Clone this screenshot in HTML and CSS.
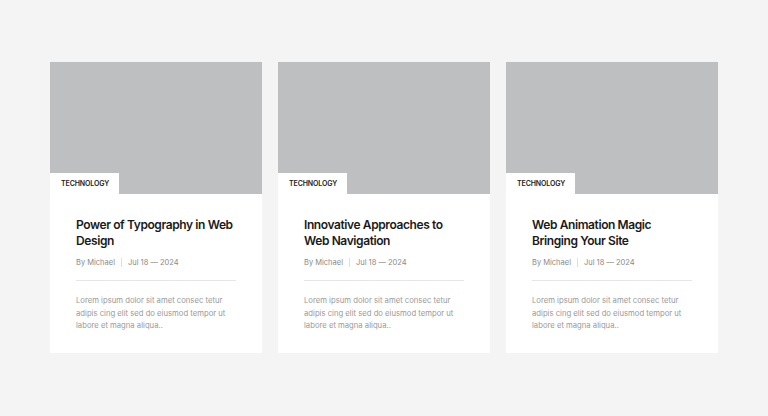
FILE: index.html
```html
<!DOCTYPE html>
<html lang="en">
<head>
    <meta charset="UTF-8">
    <meta name="viewport" content="width=device-width, initial-scale=1.0">
    <title>Blog</title>
    <link rel="stylesheet" href="styles.css">
</head>
<body>
    <div class="posts">
        <div class="post">
            <div class="post-image">
                <span class="post-tag">TECHNOLOGY</span>
            </div>
            <div class="post-body">
                <h3>Power of Typography in Web Design</h3>
                <div class="post-meta">
                    <span>By Michael</span>
                    <span class="sep"></span>
                    <span>Jul 18 — 2024</span>
                </div>
                <p>Lorem ipsum dolor sit amet consec tetur adipis cing elit sed do eiusmod tempor ut labore et magna aliqua..</p>
            </div>
        </div>
        <div class="post">
            <div class="post-image">
                <span class="post-tag">TECHNOLOGY</span>
            </div>
            <div class="post-body">
                <h3>Innovative Approaches to Web Navigation</h3>
                <div class="post-meta">
                    <span>By Michael</span>
                    <span class="sep"></span>
                    <span>Jul 18 — 2024</span>
                </div>
                <p>Lorem ipsum dolor sit amet consec tetur adipis cing elit sed do eiusmod tempor ut labore et magna aliqua..</p>
            </div>
        </div>
        <div class="post">
            <div class="post-image">
                <span class="post-tag">TECHNOLOGY</span>
            </div>
            <div class="post-body">
                <h3>Web Animation Magic Bringing Your Site</h3>
                <div class="post-meta">
                    <span>By Michael</span>
                    <span class="sep"></span>
                    <span>Jul 18 — 2024</span>
                </div>
                <p>Lorem ipsum dolor sit amet consec tetur adipis cing elit sed do eiusmod tempor ut labore et magna aliqua..</p>
            </div>
        </div>
    </div>
</body>
</html>
```

FILE: styles.css
```css
body {
    font-family: Inter, "Noto Sans", sans-serif;
    margin: 0;
    padding: 0;
    background-color: #f4f4f4;
}
.posts {
    display: flex;
    gap: 16px;
    padding: 62px 50px;
}
.post {
    width: 212px;
    background-color: #fff;
}
.post-image {
    height: 132px;
    background-color: #bebfc0;
    display: flex;
    align-items: flex-end;
}
.post-tag {
    background-color: #fff;
    color: #222;
    font-size: 7px;
    font-weight: 600;
    padding: 6px 10px 6px 11px;
    line-height: 9px;
    letter-spacing: -0.1px;
}
.post-body {
    padding: 23px 26px 20px;
}
.post-body h3 {
    margin: 0;
    font-size: 12px;
    font-weight: 600;
    line-height: 16px;
    color: #1a1a1a;
    letter-spacing: -0.4px;
}
.post-meta {
    display: flex;
    align-items: center;
    gap: 6px;
    margin-top: 9px;
    padding-bottom: 13px;
    border-bottom: 1px solid #e6e6e6;
    font-size: 7.5px;
    color: #8a8a8a;
}
.post-meta .sep {
    width: 1px;
    height: 9px;
    background-color: #e0e0e0;
}
.post-body p {
    margin: 14px 0 0;
    font-size: 7.7px;
    line-height: 12.5px;
    color: #9a9a9a;
}
```
